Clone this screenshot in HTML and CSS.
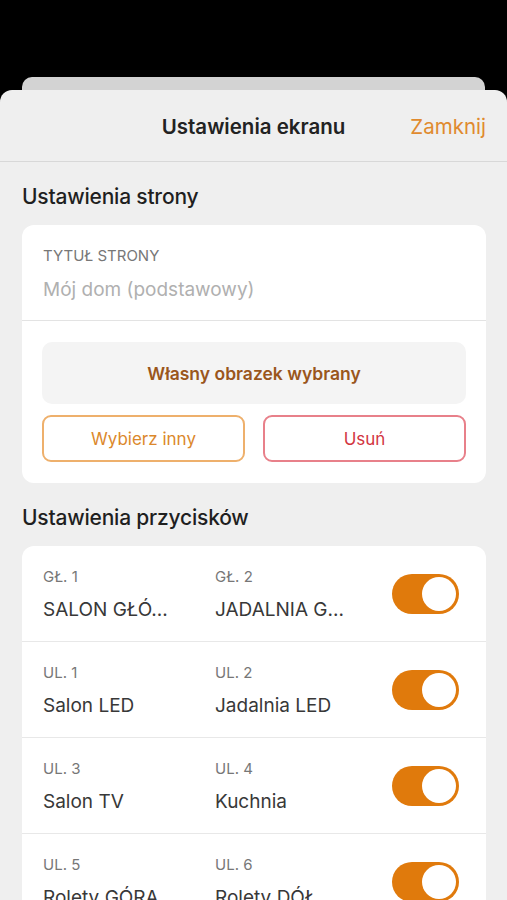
FILE: index.html
```html
<!DOCTYPE html>
<html>
<head>
    <meta charset="utf-8">
    <title>Ustawienia ekranu</title>
    <link rel="stylesheet" href="styles.css">
</head>
<body>
<div class="backsheet"></div>
<div class="sheet">
    <div class="header">
        <span></span>
        <h1 class="title">Ustawienia ekranu</h1>
        <a class="close">Zamknij</a>
    </div>

    <h2 class="section">Ustawienia strony</h2>
    <div class="card">
        <div class="field">
            <div class="label">TYTUŁ STRONY</div>
            <div class="placeholder">Mój dom (podstawowy)</div>
        </div>
        <div class="image-box">
            <div class="image-info">Własny obrazek wybrany</div>
            <div class="buttons">
                <button class="btn btn-orange">Wybierz inny</button>
                <button class="btn btn-red">Usuń</button>
            </div>
        </div>
    </div>

    <h2 class="section">Ustawienia przycisków</h2>
    <div class="card">
        <div class="row">
            <div class="col"><div class="label">GŁ. 1</div><div class="name">SALON GŁÓ...</div></div>
            <div class="col"><div class="label">GŁ. 2</div><div class="name">JADALNIA G...</div></div>
            <div class="toggle"><span class="knob"></span></div>
        </div>
        <div class="row">
            <div class="col"><div class="label">UL. 1</div><div class="name">Salon LED</div></div>
            <div class="col"><div class="label">UL. 2</div><div class="name">Jadalnia LED</div></div>
            <div class="toggle"><span class="knob"></span></div>
        </div>
        <div class="row">
            <div class="col"><div class="label">UL. 3</div><div class="name">Salon TV</div></div>
            <div class="col"><div class="label">UL. 4</div><div class="name">Kuchnia</div></div>
            <div class="toggle"><span class="knob"></span></div>
        </div>
        <div class="row">
            <div class="col"><div class="label">UL. 5</div><div class="name">Rolety GÓRA</div></div>
            <div class="col"><div class="label">UL. 6</div><div class="name">Rolety DÓŁ</div></div>
            <div class="toggle"><span class="knob"></span></div>
        </div>
    </div>
</div>
</body>
</html>
```

FILE: styles.css
```css
html, body {
    margin: 0;
    height: 100%;
    overflow: hidden;
}

body {
    background-color: #000;
    font-family: Inter, "Noto Sans", sans-serif;
}

.backsheet {
    margin: 77px 22px 0;
    height: 13px;
    background-color: #d3d3d3;
    border-radius: 10px 10px 0 0;
}

.sheet {
    background-color: #efefef;
    border-radius: 12px 12px 0 0;
    min-height: 900px;
    padding-bottom: 40px;
}

.header {
    display: grid;
    grid-template-columns: 1fr auto 1fr;
    align-items: center;
    height: 71px;
    border-bottom: 1px solid #d8d8d8;
}

.title {
    margin: 0;
    font-size: 20.5px;
    font-weight: 600;
    color: #222;
    padding-top: 2px;
}

.close {
    justify-self: end;
    margin-right: 21px;
    font-size: 20.5px;
    color: #e08a2e;
    padding-top: 2px;
}

.section {
    margin: 22px 0 15px 22px;
    font-size: 21px;
    line-height: 26px;
    font-weight: 500;
    color: #1f1f1f;
    letter-spacing: -0.2px;
}

.card {
    margin: 0 21px 0 22px;
    background-color: #fff;
    border-radius: 12px;
    overflow: hidden;
}

.field {
    padding: 22px 21px 18px;
    border-bottom: 1px solid #e3e3e3;
}

.label {
    font-size: 15px;
    line-height: 18px;
    color: #777;
}

.placeholder {
    margin-top: 13px;
    font-size: 19px;
    line-height: 24px;
    color: #b0b0b0;
}

.image-box {
    padding: 21px 20px 21px;
}

.image-info {
    height: 62px;
    display: flex;
    align-items: center;
    justify-content: center;
    background-color: #f4f4f4;
    border-radius: 10px;
    font-size: 17.5px;
    font-weight: 600;
    color: #9a561c;
}

.buttons {
    display: grid;
    grid-template-columns: 1fr 1fr;
    gap: 18px;
    margin-top: 11px;
}

.btn {
    height: 47px;
    background: #fff;
    border-radius: 9px;
    font-family: Inter, "Noto Sans", sans-serif;
    font-size: 17px;
}

.btn-orange {
    border: 2px solid #eeb06c;
    color: #db882c;
}

.btn-red {
    border: 2px solid #e8808a;
    color: #d2343f;
}

.row {
    display: flex;
    align-items: center;
    height: 95px;
    padding: 0 27px 0 21px;
    border-bottom: 1px solid #e8e8e8;
}

.col {
    width: 172px;
    padding-top: 2px;
}

.col .label {
    margin-bottom: 12px;
}

.name {
    font-size: 19px;
    line-height: 24px;
    color: #383838;
    white-space: nowrap;
}

.toggle {
    margin-left: auto;
    width: 67px;
    height: 40px;
    border-radius: 20px;
    background-color: #e07a0c;
    display: flex;
    align-items: center;
    justify-content: flex-end;
    padding-right: 3px;
    box-sizing: border-box;
}

.knob {
    width: 34px;
    height: 34px;
    border-radius: 50%;
    background-color: #fff;
}
```
